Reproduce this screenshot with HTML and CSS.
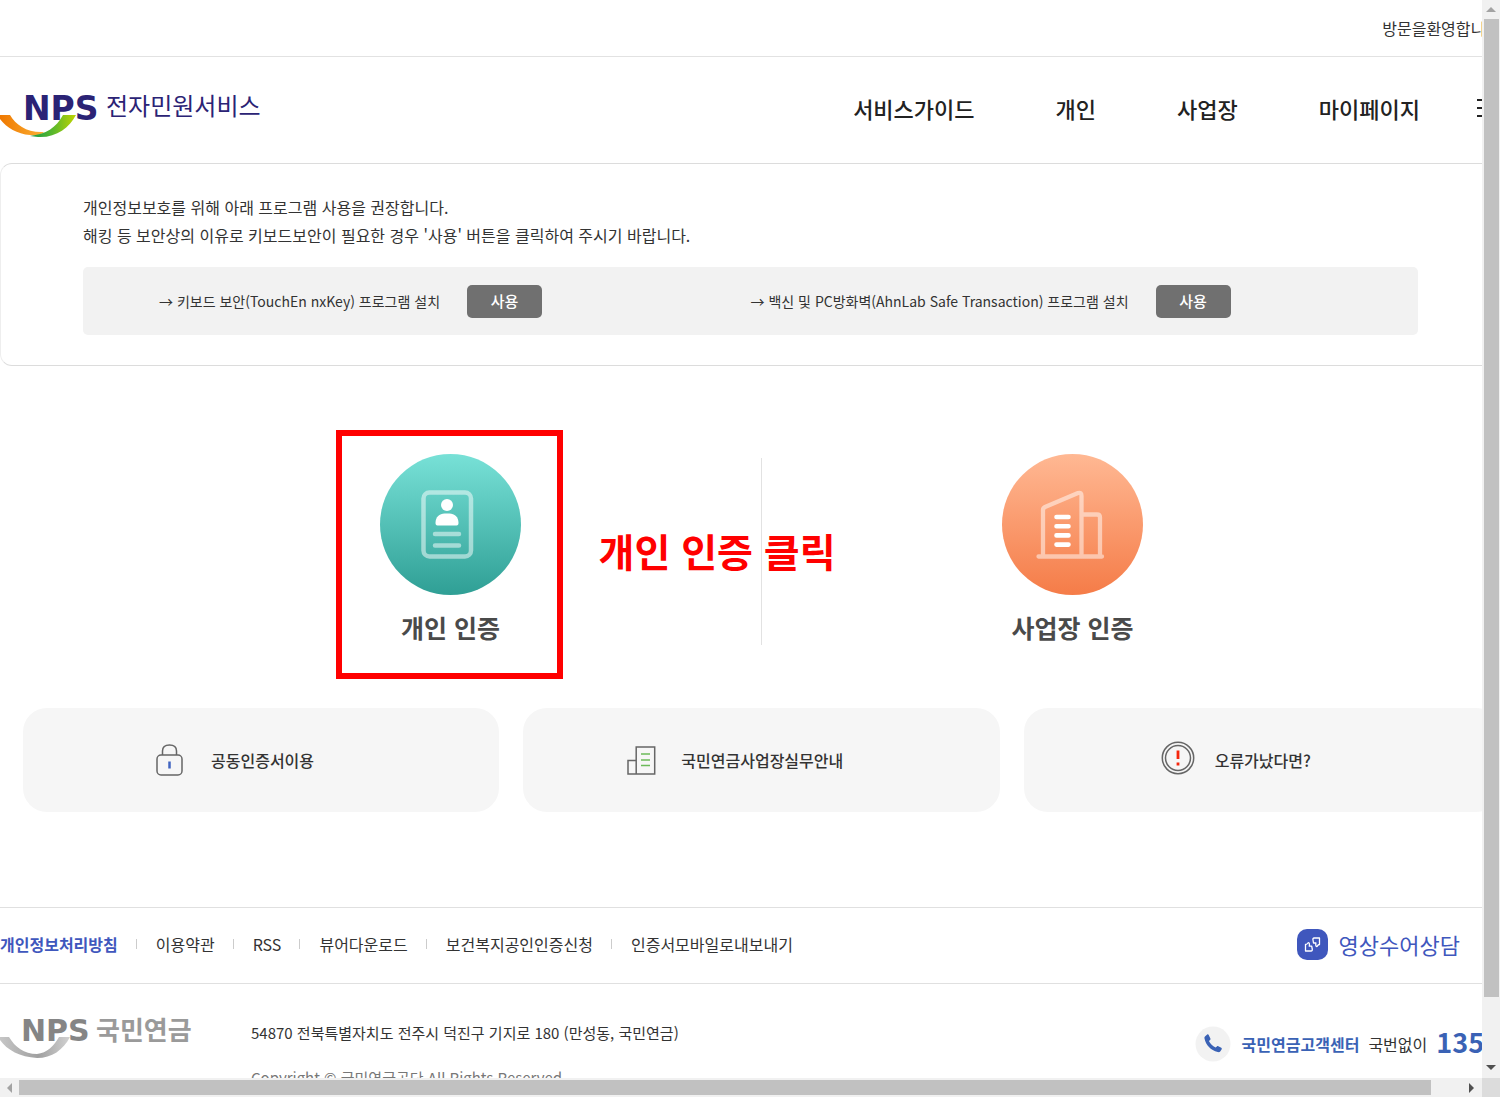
FILE: index.html
```html
<!DOCTYPE html>
<html lang="ko">
<head>
<meta charset="utf-8">
<meta name="viewport" content="width=device-width, initial-scale=1">
<title>NPS 전자민원서비스</title>
<link rel="stylesheet" href="styles.css">
</head>
<body>
<div class="window">
  <div class="viewport">
    <div class="page">
      <div class="topbar">방문을환영합니다</div>

      <header class="header">
        <a class="logo" href="#">
          <svg class="logo-mark" width="100" height="48" viewBox="0 0 100 48" aria-hidden="true">
            <defs>
              <linearGradient id="orange" x1="0" x2="1"><stop offset="0" stop-color="#ef7800"/><stop offset="1" stop-color="#fbb034"/></linearGradient>
              <linearGradient id="green" x1="0" x2="1"><stop offset="0" stop-color="#149b48"/><stop offset=".5" stop-color="#5ab82c"/><stop offset="1" stop-color="#c0d400"/></linearGradient>
            </defs>
            <text class="nps" x="23" y="30">NPS</text>
            <path fill="url(#orange)" d="M0 25h10c6 10 17 18 34 17-3 3-8 4-14 3C17 44 7 38 0 29z"/>
            <path fill="url(#green)" d="M30 46c16-2 26-8 33-21h13C69 38 56 48 38 47z"/>
          </svg>
          <span>전자민원서비스</span>
        </a>
        <nav class="nav">
          <a href="#">서비스가이드</a>
          <a href="#">개인</a>
          <a href="#">사업장</a>
          <a href="#">마이페이지</a>
        </nav>
        <button class="menu" type="button" aria-label="전체메뉴"><i></i><i></i><i></i></button>
      </header>

      <section class="notice">
        <p>개인정보보호를 위해 아래 프로그램 사용을 권장합니다.<br>해킹 등 보안상의 이유로 키보드보안이 필요한 경우 '사용' 버튼을 클릭하여 주시기 바랍니다.</p>
        <div class="programs">
          <div class="program program-first"><span>→ 키보드 보안(TouchEn nxKey) 프로그램 설치</span><button type="button">사용</button></div>
          <div class="program"><span>→ 백신 및 PC방화벽(AhnLab Safe Transaction) 프로그램 설치</span><button type="button">사용</button></div>
        </div>
      </section>

      <main class="main">
        <div class="auth">
          <div class="auth-item">
            <a href="#">
              <svg width="141" height="141" viewBox="0 0 141 141" aria-hidden="true">
                <defs><linearGradient id="teal" x1="0" y1="0" x2="0" y2="1"><stop offset="0" stop-color="#78e1d7"/><stop offset="1" stop-color="#2f9f95"/></linearGradient></defs>
                <circle cx="70.5" cy="70.5" r="70.5" fill="url(#teal)"/>
                <g fill="none" stroke="#fff" stroke-opacity=".5" stroke-width="4.5" stroke-linecap="round">
                  <rect x="43.5" y="38.5" width="47.500" height="64" rx="6"/>
                  <path d="M55 80h24M55 91.500h24"/>
                </g>
                <circle cx="67" cy="51" r="6" fill="#fff"/>
                <path fill="#fff" d="M55.500 69c0-6 4-9.500 9-9.500h5c5 0 9 3.500 9 9.500 0 1.500-.5 2.500-2 2.500h-19c-1.500 0-2-1-2-2.500z"/>
              </svg>
              <span>개인 인증</span>
            </a>
            <div class="highlight"></div>
            <strong class="callout">개인 인증 클릭</strong>
          </div>
          <div class="divider"></div>
          <div class="auth-item">
            <a href="#">
              <svg width="141" height="141" viewBox="0 0 141 141" aria-hidden="true">
                <defs><linearGradient id="coral" x1="0" y1="0" x2="0" y2="1"><stop offset="0" stop-color="#ffb893"/><stop offset="1" stop-color="#f57c48"/></linearGradient></defs>
                <circle cx="70.5" cy="70.5" r="70.5" fill="url(#coral)"/>
                <g fill="none" stroke="#fff" stroke-opacity=".5" stroke-width="4.300" stroke-linecap="round" stroke-linejoin="round">
                  <path d="M41 100V56q0-2 2-3l33-14q3.500-1 3.500 3v58M81.600 60.500H95q3 0 3 3V100M36.500 102.500h63.500"/>
                </g>
                <path d="M54.500 63h12M54.500 72.200h12M54.500 81.400h12M54.500 90.600h12" stroke="#fff" stroke-width="4.600" stroke-linecap="round"/>
              </svg>
              <span>사업장 인증</span>
            </a>
          </div>
        </div>

        <div class="cards">
          <a class="card" href="#">
            <svg width="30" height="34" viewBox="0 0 30 34" fill="none" aria-hidden="true">
              <g stroke="#666" stroke-width="1.500"><rect x="1" y="12" width="25" height="20" rx="4"/><path d="M6.500 12V8c0-4 3-6 7-6s7 2 7 6v4"/></g>
              <path d="M13.500 18.500v7" stroke="#4064c0" stroke-width="2.500"/>
            </svg>
            <span>공동인증서이용</span>
          </a>
          <a class="card" href="#">
            <svg width="30" height="34" viewBox="0 0 30 34" fill="none" aria-hidden="true">
              <g stroke="#666" stroke-width="1.500"><path d="M10.200 4h18.500v27H10.200zM10.200 17.500H2V31h8.200"/></g>
              <path d="M15 11h9M15 17h9M15 22.500h9" stroke="#6cba5a" stroke-width="1.500"/>
            </svg>
            <span>국민연금사업장실무안내</span>
          </a>
          <a class="card" href="#">
            <svg width="34" height="38" viewBox="0 0 34 38" fill="none" aria-hidden="true">
              <g stroke="#666" stroke-width="1.500"><circle cx="17" cy="17" r="15.700"/><circle cx="17" cy="17" r="12.500"/></g>
              <path d="M17 9.500v8.500M17 21.500v3" stroke="#f5260c" stroke-width="2.800"/>
            </svg>
            <span>오류가났다면?</span>
          </a>
        </div>
      </main>

      <footer>
        <div class="foot-links">
          <ul>
            <li><a class="privacy" href="#">개인정보처리방침</a></li>
            <li><a href="#">이용약관</a></li>
            <li><a href="#">RSS</a></li>
            <li><a href="#">뷰어다운로드</a></li>
            <li><a href="#">보건복지공인인증신청</a></li>
            <li><a href="#">인증서모바일로내보내기</a></li>
          </ul>
          <a class="sign" href="#">
            <svg width="31" height="31" viewBox="0 0 31 31" fill="none" aria-hidden="true">
              <rect width="31" height="31" rx="10" fill="#3f57bd"/>
              <g stroke="#fff" stroke-width="1.300" stroke-linejoin="round"><path d="M8.500 15.500v6.500h5.500c1.200 0 1.500-1 1.200-2l-.5-2.800h-2.400c.3-1.800.2-3.500-.8-3.500s-.5 1.500-3 1.800z"/><path d="M22.500 15.500V9h-5.300c-1.200 0-1.500 1-1.200 2l.5 3h2.400c-.3 1.800-.2 3.500.8 3.500s.5-1.700 2.800-2z"/></g>
            </svg>
            <span>영상수어상담</span>
          </a>
        </div>
        <div class="foot-info">
          <svg class="foot-logo" width="200" height="46" viewBox="0 0 200 46" role="img" aria-label="NPS 국민연금">
            <defs><linearGradient id="silver" x1="0" x2="1"><stop offset="0" stop-color="#c6c6c6"/><stop offset=".55" stop-color="#a0a0a0"/><stop offset="1" stop-color="#d2d2d2"/></linearGradient></defs>
            <text class="nps-foot" x="21" y="26">NPS</text>
            <text class="name-foot" x="96" y="25">국민연금</text>
            <path fill="url(#silver)" d="M0 22h9c6 10 15 17 28 17 10-1 17-8 22-17h11C63 35 52 43 37 43 20 42 7 35 0 25z"/>
          </svg>
          <address>
            <p>54870 전북특별자치도 전주시 덕진구 기지로 180 (만성동, 국민연금)</p>
            <p class="copyright">Copyright © 국민연금공단 All Rights Reserved.</p>
          </address>
          <div class="call">
            <svg width="36" height="36" viewBox="0 0 36 36" aria-hidden="true"><circle cx="18" cy="18" r="17.500" fill="#f2f2f2"/><path fill="#3a62b5" d="M10.200 10.200l2-1.600c.6-.4 1.200-.3 1.500.3l1.700 3.600c.3.600.1 1-.3 1.400l-1.200 1.200c1.500 3 3.600 5 6.700 6.500l1.300-1.200c.4-.4.900-.5 1.400-.2l3 1.600c.6.400.7.900.4 1.400l-1.300 2c-.6.900-1.500 1.200-2.600.9C15.500 24 11 19.300 9.500 12.500c-.2-1 0-1.800.7-2.300z"/></svg>
            <strong>국민연금고객센터</strong>
            <span>국번없이</span>
            <b>1355</b>
          </div>
        </div>
      </footer>
    </div>
  </div>
  <div class="bar bar-v" aria-hidden="true"><i class="arrow up"></i><div class="thumb"></div><i class="arrow down"></i></div>
  <div class="bar bar-h" aria-hidden="true"><i class="arrow left"></i><div class="thumb"></div><i class="arrow right"></i></div>
  <div class="corner"></div>
</div>
</body>
</html>
```

FILE: styles.css
```css
* { box-sizing: border-box; }
body {
  margin: 0;
  background: #fff;
  color: #333;
  font: 16px/28px "Noto Sans CJK KR", sans-serif;
}
p, ul { margin: 0; padding: 0; }
a { color: inherit; text-decoration: none; }
button { font: inherit; border: 0; cursor: pointer; }
svg { display: block; flex: none; overflow: visible; }

/* browser frame: content area plus its two scrollbars */
.window {
  display: grid;
  grid-template-columns: minmax(0, 1fr) 18px;
  grid-template-rows: minmax(0, 1fr) 19px;
  height: 100vh;
}
.viewport { overflow: hidden; }
.page { width: calc(100% + 18px); white-space: nowrap; }

.topbar {
  display: flex;
  justify-content: flex-end;
  padding: 14px 0;
  border-bottom: 1px solid #e2e2e2;
}
.header {
  display: flex;
  align-items: center;
  height: 106px;
  padding-bottom: 4px;
}
.logo {
  display: flex;
  align-items: center;
  gap: 6px;
  margin-right: auto;
  color: #2b2375;
  font-size: 24px;
}
.logo-mark { margin-top: 12px; }
.nps, .nps-foot { font-family: "DejaVu Sans", sans-serif; font-weight: 700; }
.nps { font-size: 33px; fill: #2b2375; }
.logo span { padding-bottom: 6px; }
.nav {
  display: flex;
  gap: 81px;
  color: #222;
  font-size: 22px;
  font-weight: 500;
}
.menu {
  display: grid;
  gap: 6px;
  width: 23px;
  margin-left: 57px;
  padding: 0;
  background: none;
}
.menu i { height: 2px; background: #222; }

.notice {
  padding: 29px 82px 30px;
  border: 1px solid #dcdcdc;
  border-left-color: #eee;
  border-right: 0;
  border-radius: 12px;
}
.programs {
  display: grid;
  grid-template-columns: 1fr 1fr;
  margin-top: 18px;
  border-radius: 5px;
  background: #f2f2f2;
}
.program {
  display: flex;
  align-items: center;
  gap: 27px;
  height: 68px;
  font-size: 14px;
}
.program-first { padding-left: 76px; }
.program button {
  width: 75px;
  height: 33px;
  padding: 0;
  border-radius: 5px;
  background: #707070;
  color: #fff;
  font-size: 15px;
  font-weight: 500;
}

.main { padding: 88px 0 95px 23px; }
.auth {
  display: flex;
  align-items: flex-start;
  padding: 0 117px;
}
.auth-item {
  position: relative;
  flex: 1;
  display: flex;
  justify-content: center;
}
.auth-item a {
  display: grid;
  justify-items: center;
  gap: 14px;
  color: #4a4a4a;
  font-size: 25px;
  line-height: 36px;
  font-weight: 700;
}
.divider { width: 1px; height: 187px; margin-top: 4px; background: #e2e2e2; }
.highlight {
  position: absolute;
  top: -24px;
  left: calc(50% - 115px);
  width: 227px;
  height: 249px;
  border: 6px solid #f00;
}
.callout {
  position: absolute;
  top: 66px;
  left: calc(50% + 148px);
  z-index: 1;
  color: #f00;
  font-size: 39px;
  line-height: 60px;
}

.cards {
  display: grid;
  grid-template-columns: repeat(3, 1fr);
  gap: 24px;
  margin-top: 63px;
}
.card {
  display: flex;
  align-items: center;
  gap: 25px;
  height: 104px;
  padding-left: 133px;
  border-radius: 24px;
  background: #f6f6f6;
  font-weight: 500;
}
.card:nth-child(2) { padding-left: 103px; }
.card:nth-child(3) { padding-left: 137px; gap: 20px; }

.foot-links {
  display: flex;
  align-items: center;
  justify-content: space-between;
  height: 77px;
  padding: 0 40px 3px 0;
  border: 1px solid #e0e0e0;
  border-width: 1px 0;
}
.foot-links ul { display: flex; list-style: none; }
.foot-links li { display: flex; align-items: center; }
.foot-links li + li::before {
  content: "";
  width: 1px;
  height: 10px;
  margin: 0 19px 0 18px;
  background: #ccc;
}
.privacy { color: #3f57bd; font-weight: 700; }
.sign {
  display: flex;
  align-items: center;
  gap: 11px;
  color: #3f57bd;
  font-size: 22px;
}
.foot-info {
  display: flex;
  align-items: flex-start;
  padding-top: 31px;
}
.nps-foot { font-size: 30px; fill: #858585; }
.name-foot { font-size: 26px; font-weight: 700; fill: #9a9a9a; }
address { margin: 4px auto 0 51px; font-size: 15px; font-style: normal; }
.copyright { margin-top: 17px; color: #777; }
.call { display: flex; align-items: center; gap: 9px; margin-top: 11px; }
.call svg { margin-right: 2px; }
.call strong, .call b { color: #3a62b5; }
.call b { padding-bottom: 5px; font-size: 27px; }

.bar { display: flex; align-items: center; background: #f1f1f1; }
.bar-v { grid-area: 1 / 2; flex-direction: column; }
.bar-h { grid-area: 2 / 1; }
.corner { grid-area: 2 / 2; background: #dcdcdc; }
.thumb { background: #c1c1c1; }
.bar-v .thumb { width: 15px; flex: 0 1 978px; margin-bottom: auto; }
.bar-h .thumb { height: 15px; flex: 0 1 1412px; margin-right: auto; }
.arrow { flex: none; border: 5px solid transparent; }
.up { margin: 2px 0 7px; border-bottom-color: #a3a3a3; }
.down { margin-bottom: 3px; border-top-color: #505050; }
.left { margin: 0 7px 0 2px; border-right-color: #a3a3a3; }
.right { margin-right: 3px; border-left-color: #505050; }
```
